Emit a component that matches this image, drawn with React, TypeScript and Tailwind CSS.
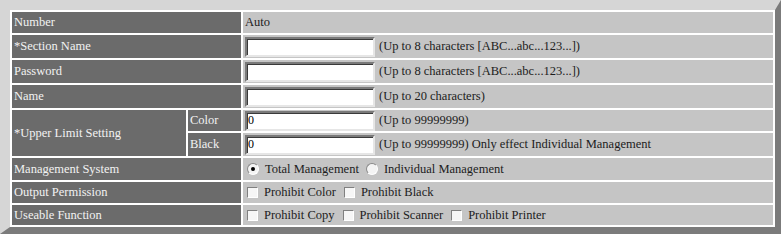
import React from "react";

const label = "bg-[#6b6b6b] text-[#f2f2f2] flex items-center pl-[2px]";
const value = "bg-[#c5c5c5] text-[#1c1c1c] flex items-center pl-[2px]";

function TextBox({ val = "" }: { val?: string }) {
  return (
    <input
      type="text"
      defaultValue={val}
      className="w-[130px] h-[20px] bg-white border-2 border-t-[#7a7a7a] border-l-[#7a7a7a] border-b-[#e6e6e6] border-r-[#e6e6e6] shadow-[inset_1px_1px_0_#3a3a3a] px-[1px] text-[12px] text-black outline-none [font-family:Liberation_Serif,Times_New_Roman,serif] mr-[4px]"
    />
  );
}

function Check({ text }: { text: string }) {
  return (
    <span className="flex items-center mr-[6px]">
      <span className="w-[11px] h-[11px] ml-[2px] mr-[6px] bg-[#f6f6f6] border border-t-[#808080] border-l-[#808080] border-b-[#ffffff] border-r-[#ffffff]" />
      {text}
    </span>
  );
}

function Radio({ text, on }: { text: string; on?: boolean }) {
  return (
    <span className="flex items-center mr-[5px]">
      <span className="w-[12px] h-[12px] ml-[2px] mr-[6px] rounded-full bg-[#f4f4f4] border border-t-[#8a8a8a] border-l-[#8a8a8a] border-b-[#ffffff] border-r-[#ffffff] flex items-center justify-center">
        {on && <span className="w-[4px] h-[4px] rounded-full bg-black" />}
      </span>
      {text}
    </span>
  );
}

export default function App() {
  return (
    <div className="w-[781px] h-[234px] border-t-[10px] border-l-[10px] border-r-[6px] border-b-[7px] border-t-[#d6d6d6] border-l-[#d6d6d6] border-r-[#7b7b7b] border-b-[#7b7b7b] bg-white p-[2px] [font-family:Liberation_Serif,Times_New_Roman,serif] text-[12.5px] leading-none">
      <div className="grid grid-cols-[174px_53px_1fr] grid-rows-[21px_23px_23px_23px_21px_23px_22px_21px_20px] gap-[2px]">
        <div className={`${label} col-span-2`}>Number</div>
        <div className={value}>Auto</div>

        <div className={`${label} col-span-2`}>*Section Name</div>
        <div className={value}>
          <TextBox />
          (Up to 8 characters [ABC...abc...123...])
        </div>

        <div className={`${label} col-span-2`}>Password</div>
        <div className={value}>
          <TextBox />
          (Up to 8 characters [ABC...abc...123...])
        </div>

        <div className={`${label} col-span-2`}>Name</div>
        <div className={value}>
          <TextBox />
          (Up to 20 characters)
        </div>

        <div className={`${label} row-span-2`}>*Upper Limit Setting</div>
        <div className={label}>Color</div>
        <div className={value}>
          <TextBox val="0" />
          (Up to 99999999)
        </div>
        <div className={label}>Black</div>
        <div className={value}>
          <TextBox val="0" />
          (Up to 99999999) Only effect Individual Management
        </div>

        <div className={`${label} col-span-2`}>Management System</div>
        <div className={value}>
          <Radio text="Total Management" on />
          <Radio text="Individual Management" />
        </div>

        <div className={`${label} col-span-2`}>Output Permission</div>
        <div className={value}>
          <Check text="Prohibit Color" />
          <Check text="Prohibit Black" />
        </div>

        <div className={`${label} col-span-2`}>Useable Function</div>
        <div className={value}>
          <Check text="Prohibit Copy" />
          <Check text="Prohibit Scanner" />
          <Check text="Prohibit Printer" />
        </div>
      </div>
    </div>
  );
}
